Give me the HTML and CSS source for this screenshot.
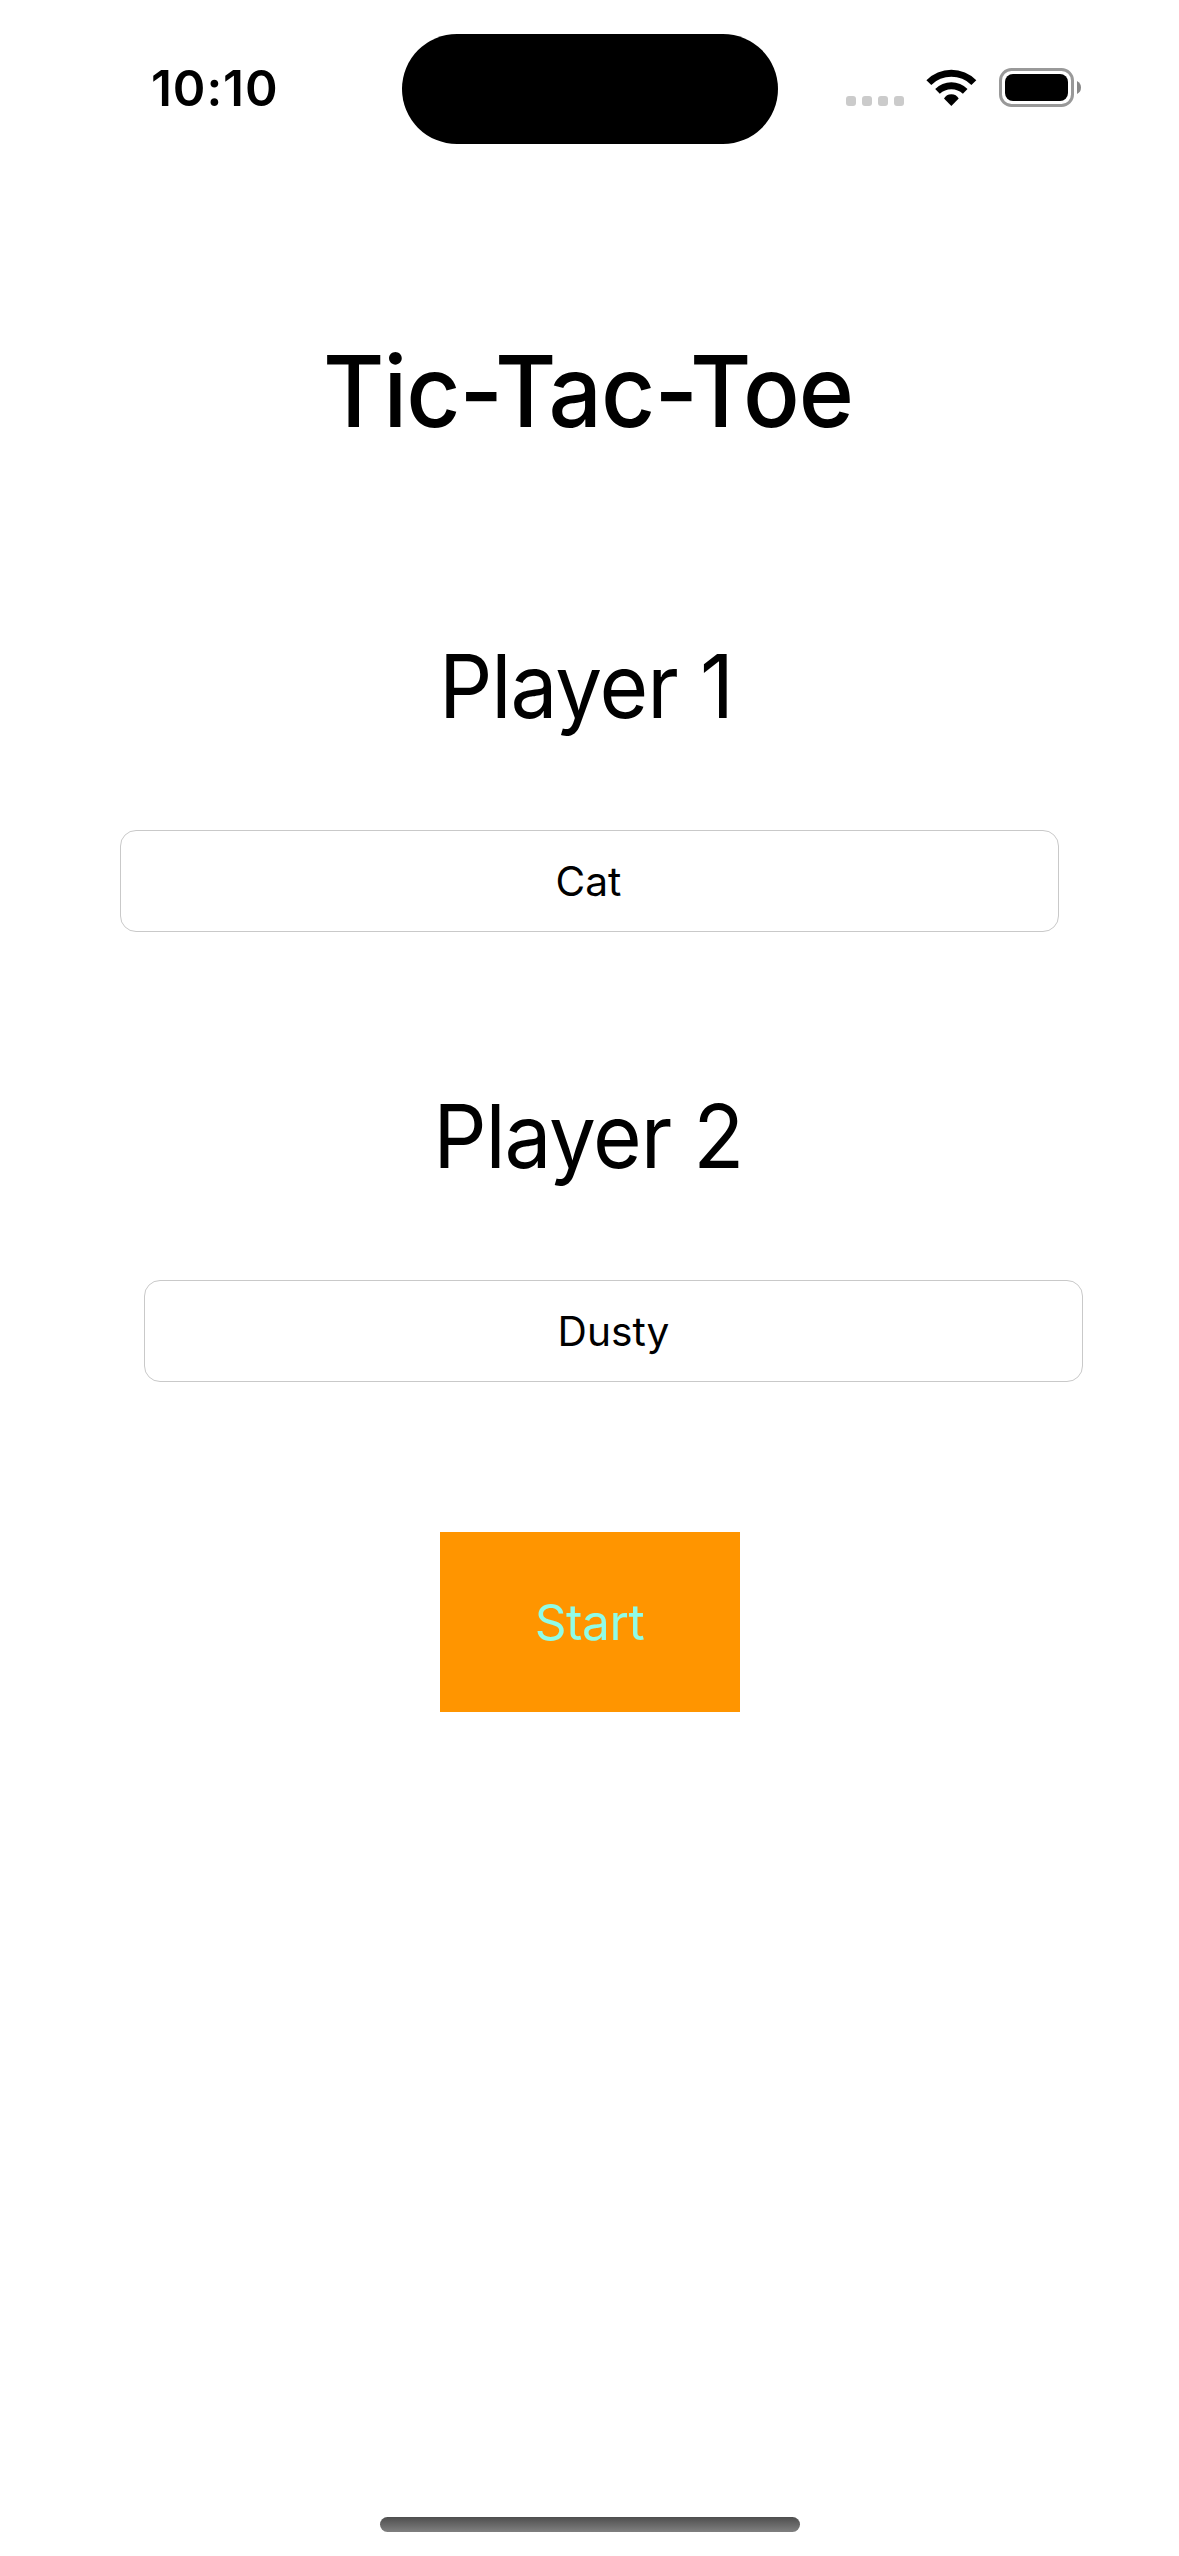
FILE: index.html
```html
<!DOCTYPE html>
<html lang="en">
<head>
<meta charset="utf-8">
<title>Tic-Tac-Toe</title>
<link rel="stylesheet" href="styles.css">
</head>
<body>
<div class="screen">
  <header class="status">
    <span class="time">10:10</span>
    <div class="island"></div>
    <div class="indicators">
      <div class="signal"><i></i><i></i><i></i><i></i></div>
      <svg class="wifi" viewBox="0 0 51 37" aria-hidden="true">
        <path d="M.4 11.2A35 35 0 0 1 50.3 11.2L45.4 15.9A28.6 28.6 0 0 0 5.3 15.9Z"/>
        <path d="M9.2 19.9A22.8 22.8 0 0 1 41.5 19.9L36.9 24.7A17 17 0 0 0 13.8 24.7Z"/>
        <path d="M18 29.6A8.3 8.3 0 0 1 32.7 29.6L25.35 37Z"/>
      </svg>
      <svg class="battery" viewBox="0 0 82 39" aria-hidden="true">
        <rect x="1.5" y="1.5" width="72" height="36" rx="11" fill="none" stroke="#999" stroke-width="3"/>
        <rect x="6" y="6" width="63" height="27" rx="8"/>
        <path d="M78 13Q82 15 82 19.5T78 26Z" fill="#888"/>
      </svg>
    </div>
  </header>
  <main class="setup">
    <h1 class="title">Tic-Tac-Toe</h1>
    <label class="player player-one" for="p1">Player 1</label>
    <input class="field field-one" id="p1" type="text" value="Cat">
    <label class="player player-two" for="p2">Player 2</label>
    <input class="field field-two" id="p2" type="text" value="Dusty">
    <button class="start" type="button">Start</button>
  </main>
  <div class="home"></div>
</div>
</body>
</html>
```
FILE: styles.css
```css
* { box-sizing: border-box; }
body { margin: 0; background: #fff; }
.screen {
  width: 1179px;
  height: 2556px;
  display: flex;
  flex-direction: column;
  font-family: Inter, "Liberation Sans", sans-serif;
  color: #000;
}

.status {
  height: 177px;
  padding: 33px 98px 0 151px;
  display: grid;
  grid-template-columns: 250.5px 376px 1fr;
  align-items: start;
}
.time {
  margin-top: 25px;
  font-size: 49.5px;
  font-weight: 600;
  line-height: 60px;
  letter-spacing: .9px;
}
.island {
  height: 110px;
  margin-top: 1px;
  border-radius: 55px;
  background: #000;
}
.indicators {
  margin-top: 35px;
  display: flex;
  align-items: flex-end;
  justify-content: flex-end;
}
.signal { display: flex; gap: 6px; margin: 0 22px 1px 0; }
.signal i { width: 10px; height: 10px; border-radius: 3px; background: #cbcbcb; }
.wifi { width: 51px; height: 37px; margin: 0 22px 1px 0; }
.battery { width: 82px; height: 39px; }

.setup {
  flex: 1;
  padding-top: 154px;
  display: flex;
  flex-direction: column;
  align-items: center;
}
/* Large text is set slightly condensed */
.title, .player { transform: scaleX(.95); }
.title {
  margin: 0 0 182px;
  padding-right: 2px;
  font-size: 99px;
  font-weight: 500;
  line-height: 120px;
  letter-spacing: -1px;
}
.player { font-size: 88px; line-height: 106px; white-space: pre; }
.player-one { padding-right: 8px; letter-spacing: -1.1px; }
.player-two { padding-right: 3px; letter-spacing: -1.27px; }
.field {
  width: 939px;
  height: 102px;
  padding: 0;
  border: 1px solid #c9c9c9;
  border-radius: 16px;
  background: #fff;
  color: #000;
  font-family: inherit;
  font-size: 40.7px;
  text-align: center;
}
.field-one { margin: 91px 0 151px; padding-right: 2px; }
.field-two { margin: 91px 0 150px 48px; }
.start {
  width: 300px;
  height: 180px;
  margin-left: 1px;
  padding: 0 1px 0 0;
  border: 0;
  background: #ff9500;
  color: #90fce6;
  font-family: inherit;
  font-size: 49.5px;
  letter-spacing: -.4px;
}

.home {
  width: 420px;
  height: 15px;
  margin: 0 0 24px 380px;
  border-radius: 7.5px;
  background: linear-gradient(#4e4e4e, #808080);
}
```
